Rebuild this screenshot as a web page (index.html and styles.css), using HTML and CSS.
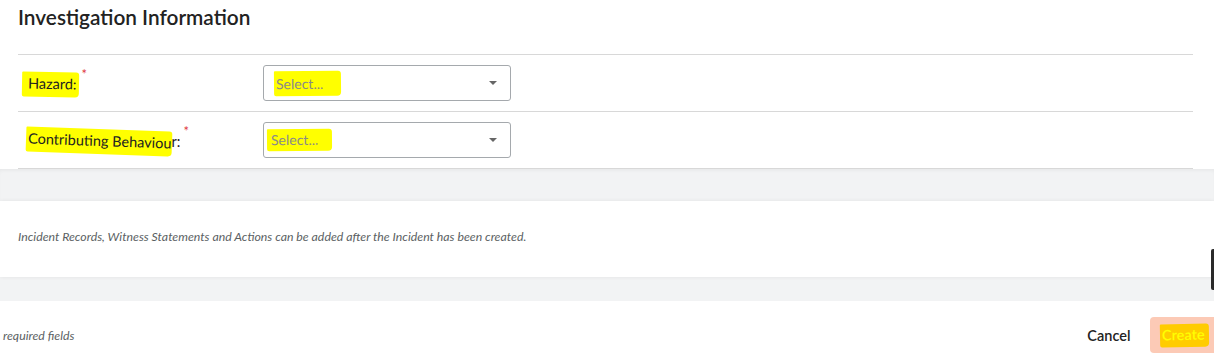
FILE: index.html
```html
<!DOCTYPE html>
<html lang="en">
<head>
  <meta charset="UTF-8" />
  <meta name="viewport" content="width=device-width, initial-scale=1" />
  <title>Investigation Information</title>
  <link rel="stylesheet" href="styles.css">
</head>
<body>

  <div class="section">
    <h2>Investigation Information</h2>

    <div class="form-row">
      <label class="field-label"><span class="hl hl-hazard">Hazard:</span><sup class="req">*</sup></label>
      <div class="select">
        <span class="placeholder"><span class="hl hl-select">Select...</span></span>
        <span class="caret"></span>
      </div>
    </div>

    <div class="form-row">
      <label class="field-label"><span class="hl hl-behaviour">Contributing Behaviou</span>r:<sup class="req">*</sup></label>
      <div class="select">
        <span class="placeholder"><span class="hl hl-select2">Select...</span></span>
        <span class="caret"></span>
      </div>
    </div>
  </div>

  <div class="band band-top"></div>

  <div class="note">
    <p>Incident Records, Witness Statements and Actions can be added after the Incident has been created.</p>
    <span class="edge-tab"></span>
  </div>

  <div class="band band-bottom"></div>

  <div class="footer">
    <span class="hint">required fields</span>
    <div class="actions">
      <button class="btn-link">Cancel</button>
      <button class="btn-create"><span class="hl hl-create">Create</span></button>
    </div>
  </div>

</body>
</html>
```

FILE: styles.css
```css
body {
  margin: 0;
  background: #fff;
  color: #222;
  font-family: Lato, 'Liberation Sans', sans-serif;
  width: 1214px;
  overflow: hidden;
}

.section {
  padding: 0 21px 0 18px;
}

h2 {
  margin: 0;
  height: 54px;
  padding-top: 4px;
  box-sizing: border-box;
  font-size: 20.8px;
  font-weight: 600;
  line-height: 26px;
  color: #222;
}

.form-row {
  display: flex;
  align-items: center;
  height: 57px;
  padding: 10px 0;
  box-sizing: border-box;
  border-top: 1px solid #d8d8d8;
}

.form-row:last-child {
  height: 58px;
  border-bottom: 1px solid #d8d8d8;
}

.field-label {
  width: 245px;
  padding-left: 10px;
  box-sizing: border-box;
  font-size: 14.5px;
  color: #222;
  position: relative;
  top: 1px;
}

.req {
  color: #e0393e;
  font-size: 13px;
  margin-left: 3px;
  position: relative;
  top: -5px;
}

.hl {
  background: #ffff00;
  padding: 3px 2px 5px 4px;
  margin-left: -4px;
  border-radius: 1px 3px 4px 2px;
}

.hl-hazard {
  display: inline-block;
  transform: rotate(1deg);
  padding-left: 6px;
  margin-left: -6px;
}

.hl-behaviour {
  display: inline-block;
  transform: rotate(2deg);
  padding: 3px 0 5px 2px;
  margin-left: -2px;
  margin-right: 0;
}

.select {
  width: 248px;
  height: 36px;
  border: 1px solid #a5a9ad;
  border-radius: 3px;
  box-sizing: border-box;
  display: flex;
  align-items: center;
  justify-content: space-between;
  padding: 0 13px 0 12px;
}

.placeholder {
  font-size: 14px;
  color: #8a8a8a;
}

.hl-select {
  display: inline-block;
  padding: 4px 18px 4px 2px;
  margin-left: -2px;
  transform: rotate(-0.5deg);
}

.hl-select2 {
  display: inline-block;
  padding: 2px 14px 3px 4px;
  margin-left: -9px;
  transform: rotate(-0.5deg);
}

.caret {
  width: 0;
  height: 0;
  border-left: 4px solid transparent;
  border-right: 4px solid transparent;
  border-top: 4px solid #666;
}

.band {
  background: #f2f3f4;
}

.band-top {
  height: 32px;
  box-shadow: inset 0 3px 4px -2px rgba(0, 0, 0, 0.06);
}

.band-bottom {
  height: 24px;
}

.note {
  position: relative;
  height: 76px;
  background: #fff;
  display: flex;
  align-items: center;
  padding-left: 18px;
  padding-bottom: 6px;
  box-sizing: border-box;
  box-shadow: 0 0 4px rgba(0, 0, 0, 0.07);
}

.note p {
  margin: 0;
  font-size: 12.3px;
  font-style: italic;
  color: #5b5f63;
}

.edge-tab {
  position: absolute;
  right: 0;
  top: 48px;
  width: 3px;
  height: 41px;
  background: #2a2a2a;
  border-radius: 2px 0 0 2px;
}

.footer {
  display: flex;
  align-items: center;
  justify-content: space-between;
  height: 62px;
  padding: 6px 0 0 3px;
  box-sizing: border-box;
}

.hint {
  font-size: 12.3px;
  font-style: italic;
  color: #5b5f63;
}

.actions {
  display: flex;
  align-items: center;
  gap: 20px;
  margin-right: -22px;
}

.btn-link {
  border: none;
  background: none;
  font-family: inherit;
  font-size: 14.5px;
  font-weight: 600;
  color: #222;
  padding: 0;
}

.btn-create {
  border: none;
  background: #fccab6;
  border-radius: 4px;
  height: 36px;
  padding: 0 27px 0 10px;
  font-family: inherit;
  font-size: 14.5px;
  font-weight: 600;
  color: #ffff00;
}

.hl-create {
  background: #ffcc00;
  display: inline-block;
  padding: 2px 4px 4px 2px;
  margin-left: 0;
  transform: rotate(-1deg);
}
```
